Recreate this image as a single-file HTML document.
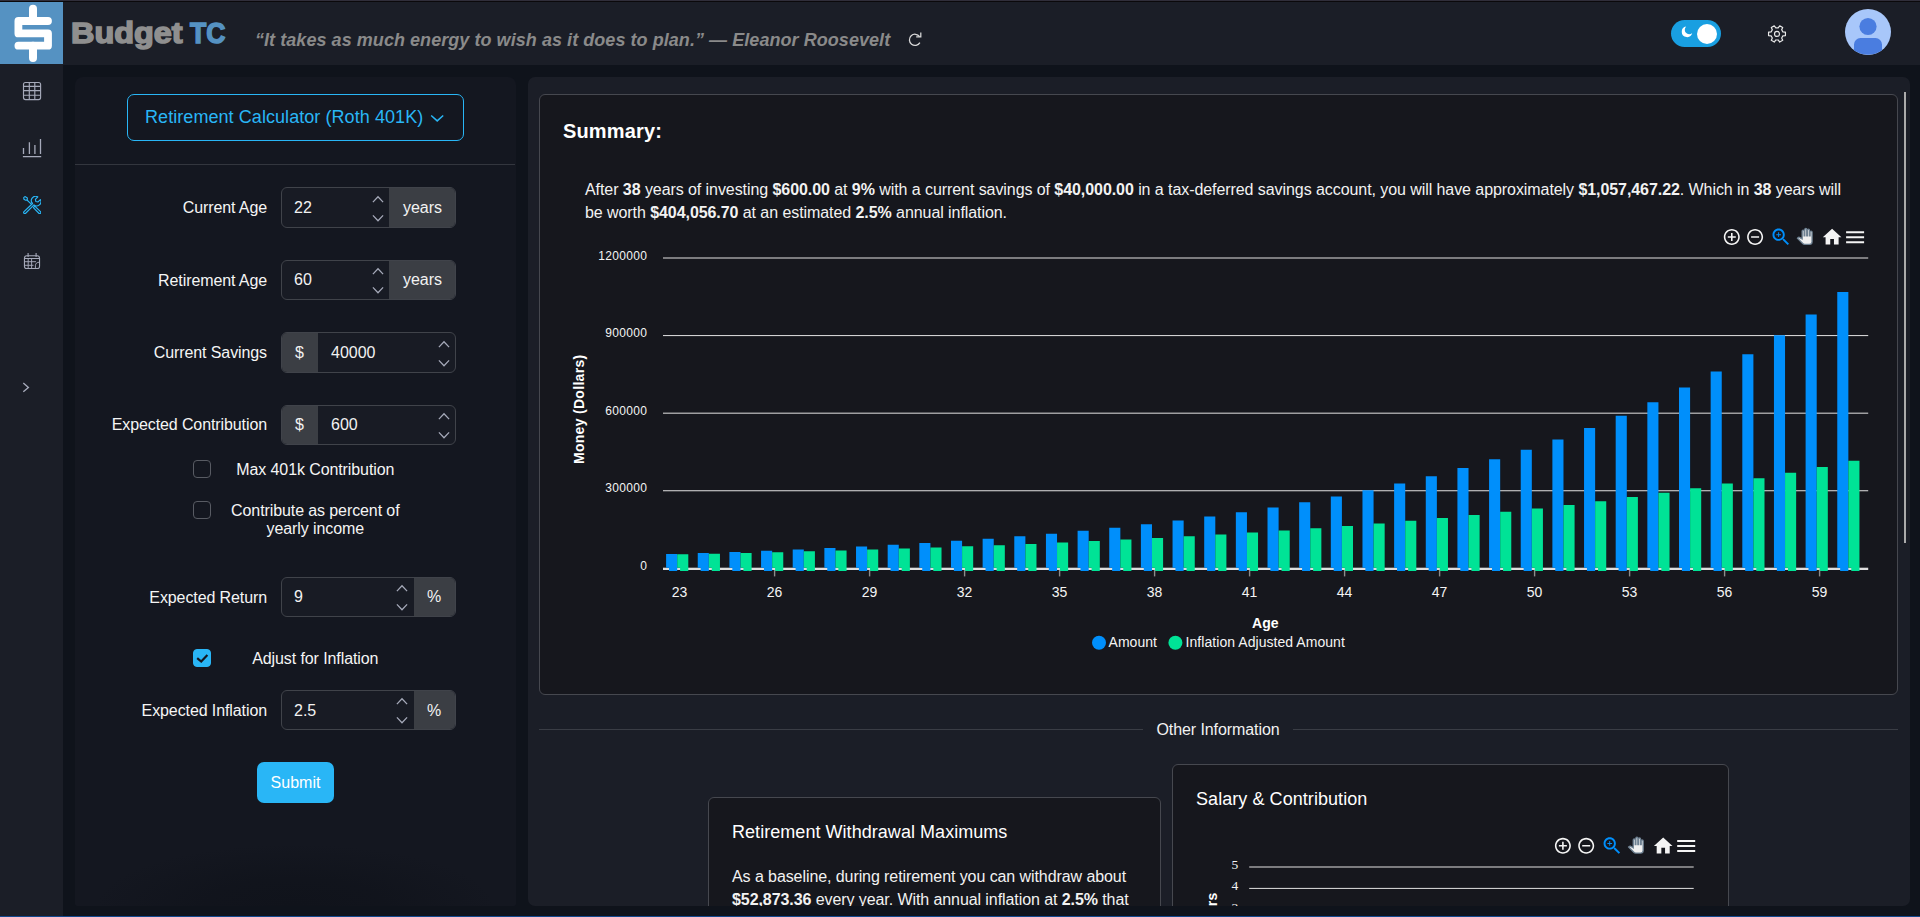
<!DOCTYPE html>
<html lang="en">
<head>
<meta charset="utf-8">
<title>Budget TC - Retirement Calculator</title>
<style>
*{box-sizing:border-box;margin:0;padding:0}
html,body{width:1920px;height:917px;overflow:hidden;background:#0f131b;font-family:"Liberation Sans",Arial,sans-serif;color:#f2f2f2}
body{position:relative}
.abs{position:absolute}
#topline1{left:0;top:0;width:1920px;height:1px;background:#302e3a}
#topline2{left:0;top:1px;width:1920px;height:1px;background:#0b090b}
#header{left:0;top:2px;width:1920px;height:63px;background:#1b1e27}
#sidebar{left:0;top:64px;width:63px;height:852px;background:#1b1e27}
#logo{left:0;top:2px;width:63px;height:62px;background:#5592c2}
.brand{top:13.3px;height:40px;line-height:40px;font-weight:700;font-size:28.8px;white-space:nowrap;transform-origin:0 50%}
.b1{color:#8f8f8f;-webkit-text-stroke:1.5px #8f8f8f}
.b2{color:#5592c2;-webkit-text-stroke:1.5px #5592c2}
#quote{left:255px;top:28px;height:24px;line-height:24px;font-size:18px;font-style:italic;font-weight:700;color:#8a8a8a;white-space:nowrap;letter-spacing:.055px}
#bottomline{left:0;top:916px;width:1920px;height:1px;background:#13498f}
#leftpanel{left:75px;top:77px;width:441px;height:829px;border-radius:8px 8px 2px 2px;background:#141720;overflow:hidden}
#leftpanel .glow{left:0;top:0;width:440px;height:829px;background:radial-gradient(ellipse 200px 62px at 50% 100%,#10131b 0%,rgba(16,19,27,.75) 45%,rgba(16,19,27,0) 100%)}
#mainpanel{left:528px;top:77px;width:1382px;height:829px;border-radius:7px;background:#1b1e27;overflow:hidden}
.card{position:absolute;background:#16171d;border:1px solid #46484f;border-radius:6px}
.lbl{position:absolute;letter-spacing:-.1px;font-size:16px;line-height:20px;height:20px;white-space:nowrap;text-align:right;color:#f5f5f5}
.grp{position:absolute;left:281px;width:175px;height:40px;border:1px solid #40434a;border-radius:6px;background:#181b24;overflow:hidden}
.grp .addon{position:absolute;top:-1px;background:#3b3e44}
.val{position:absolute;height:20px;line-height:20px;font-size:16px;color:#f2f2f2;white-space:nowrap}
.cb{position:absolute;left:193px;width:18px;height:18px;border:1px solid #585b63;border-radius:4px;background:#141720}
.cb.on{background:#29b6f6;border-color:#29b6f6}
.cbl{position:absolute;letter-spacing:-.1px;font-size:16px;line-height:18px;text-align:center;color:#f5f5f5;white-space:nowrap}
</style>
</head>
<body>
<div class="abs" id="header"></div>
<div class="abs" id="sidebar"></div>
<div class="abs" id="topline1"></div><div class="abs" id="topline2"></div>
<div class="abs" id="logo"><svg width="63" height="62" viewBox="0 2 63 62" style="display:block">
<path d="M33 8.7V21M33 45.7V58" stroke="#fff" stroke-width="8" stroke-linecap="round" fill="none"/>
<path d="M48 21H18.4V33.4H48V45.7H18.4" stroke="#fff" stroke-width="7.8" stroke-linecap="round" stroke-linejoin="round" fill="none"/>
</svg></div>
<div class="abs brand b1" style="left:71.200px;transform:scaleX(1.126)">Budget</div><div class="abs brand b2" style="left:189.700px;transform:scaleX(0.922)">TC</div>
<div class="abs" id="quote">“It takes as much energy to wish as it does to plan.” — Eleanor Roosevelt</div>
<svg class="abs" style="left:905px;top:30px" width="20" height="20" viewBox="905 30 20 20"><path d="M919.6 36.6A5.6 5.6 0 1 0 919.9 42.6" stroke="#d9d9d9" stroke-width="1.25" fill="none"/><path d="M916.2 36.8H920.8V32.6" stroke="#d9d9d9" stroke-width="1.25" fill="none"/></svg>
<div class="abs" style="left:1671px;top:20px;width:50px;height:27px;border-radius:14px;background:#199fe1"></div>
<div class="abs" style="left:1697px;top:23.5px;width:20px;height:20px;border-radius:10px;background:#fff"></div>
<svg class="abs" style="left:1680px;top:25px" width="14" height="14" viewBox="0 0 14 14"><path d="M6.2 1.6A5.3 5.3 0 1 0 12.2 8.1A4.1 4.1 0 0 1 6.2 1.6Z" fill="#fff"/></svg>
<svg class="abs" style="left:1765px;top:22px" width="24" height="24" viewBox="1765 22 24 24"><path d="M1782.87 31.89 L1785.43 32.19 L1785.43 35.61 L1782.87 35.91 L1781.67 37.98 L1782.69 40.35 L1779.73 42.05 L1778.19 39.98 L1775.81 39.98 L1774.27 42.05 L1771.31 40.35 L1772.33 37.98 L1771.13 35.91 L1768.57 35.61 L1768.57 32.19 L1771.13 31.89 L1772.33 29.82 L1771.31 27.45 L1774.27 25.75 L1775.81 27.82 L1778.19 27.82 L1779.73 25.75 L1782.69 27.45 L1781.67 29.82Z" stroke="#e8e8e8" stroke-width="1.2" stroke-linejoin="round" fill="none"/><circle cx="1777" cy="33.9" r="2.5" stroke="#e8e8e8" stroke-width="1.15" fill="none"/></svg>
<svg class="abs" style="left:1845px;top:9px" width="46" height="46" viewBox="0 0 46 46"><defs><clipPath id="avc"><circle cx="23" cy="23" r="23"/></clipPath></defs><circle cx="23" cy="23" r="23" fill="#a8c7fa"/><g clip-path="url(#avc)" fill="#4a7de0"><circle cx="23" cy="17.5" r="8.6"/><path d="M9 42v-6.5a6.5 6.5 0 0 1 6.5-6.5h15a6.5 6.5 0 0 1 6.5 6.5V42a30 30 0 0 1-28 0z"/></g></svg>
<svg class="abs" style="left:20px;top:79px" width="24" height="24" viewBox="20 79 24 24" fill="none" stroke="#a6aaba" stroke-width="1.15">
<rect x="23.5" y="82.5" width="17.1" height="17.1" rx="2"/><path d="M29.3 82.5V99.6M34.8 82.5V99.6M23.5 86.3H40.6M23.5 90.6H40.6M23.5 95.2H40.6"/></svg>
<svg class="abs" style="left:20px;top:136px" width="24" height="24" viewBox="20 136 24 24" fill="none" stroke="#a6aaba" stroke-width="1.3" stroke-linecap="butt">
<path d="M23.5 147.9V153.9M29.4 142.3V153.9M34.9 144.9V153.9M40.5 138.9V153.9M22.9 156.6H41.2"/></svg>
<svg class="abs" style="left:22.9px;top:195.9px" width="18.3" height="18.3" viewBox="0 0 18 18" fill="none" stroke="#29b6f6" stroke-width="1.15" stroke-linejoin="round" stroke-linecap="round">
<path d="M0.7 1.6L1.9 0.6L4.3 1.9L4.1 3.9L2.6 4.2L0.9 3.2Z"/>
<path d="M3.9 3.9L8.4 8.2"/>
<path d="M10.2 11.4L11.6 10L17.2 15.4A1 1 0 0 1 15.6 17Z"/>
<path d="M1 15.4L9.4 7.4A4.2 4.2 0 0 1 14.6 0.9L12.2 3.3L12.6 5.4L14.8 5.8L17.1 3.5A4.2 4.2 0 0 1 10.8 8.8L2.6 17A1.1 1.1 0 0 1 1 15.4Z"/>
</svg>
<svg class="abs" style="left:20px;top:250px" width="24" height="24" viewBox="20 250 24 24" fill="none" stroke="#a6aaba" stroke-width="1.1" stroke-linejoin="round">
<rect x="24.45" y="255.75" width="15.1" height="12.8" rx="2.4"/>
<path d="M28.1 253V257M36.1 253V257M24.500 258.500H39.500"/><path stroke-width="0.95" d="M24.800 261.700H36M24.800 265.300H33.500M28.200 259V268M31.600 259V268M39.500 262.200C37 262.200 35.400 263.400 35.400 265.800V268.500"/></svg>
<svg class="abs" style="left:18px;top:379px" width="16" height="16" viewBox="18 379 16 16" fill="none" stroke="#a6aaba" stroke-width="1.35"><path d="M23.3 383.1L28.4 387.45L23.3 391.8"/></svg>
<div class="abs" id="leftpanel"><div class="abs glow"></div></div>
<div class="abs" style="left:127px;top:94px;width:337px;height:47px;border:1px solid #29b6f6;border-radius:7px"></div>
<div class="abs" style="left:145px;top:105px;height:24px;line-height:24px;font-size:18px;color:#29b6f6;white-space:nowrap;letter-spacing:.065px">Retirement Calculator (Roth 401K)</div>
<svg class="abs" style="left:428px;top:110px" width="18" height="16" viewBox="428 110 18 16" fill="none" stroke="#29b6f6" stroke-width="1.5"><path d="M431.2 115.5L437.2 120.900L443.2 115.5"/></svg>
<div class="abs" style="left:75px;top:164px;width:440px;height:1px;background:#33363e"></div>
<div class="lbl" style="left:75px;width:192px;top:197.5px">Current Age</div>
<div class="grp" style="top:187px;height:41px"><div class="addon" style="left:107px;width:68px;height:41px"></div></div>
<div class="val" style="left:294px;top:198px">22</div><div class="val" style="left:389px;width:67px;text-align:center;top:198px">years</div>
<svg class="abs" style="left:370.2px;top:187.5px" width="16" height="40" viewBox="0 0 16 40" fill="none" stroke="#a6aaba" stroke-width="1.25"><path d="M2.9 14.1L8 8.7L13.1 14.100M2.9 27.4L8 32.8L13.1 27.400"/></svg>
<div class="lbl" style="left:75px;width:192px;top:270.5px">Retirement Age</div>
<div class="grp" style="top:260px;height:40px"><div class="addon" style="left:107px;width:68px;height:40px"></div></div>
<div class="val" style="left:294px;top:269.5px">60</div><div class="val" style="left:389px;width:67px;text-align:center;top:269.5px">years</div>
<svg class="abs" style="left:370.2px;top:260.0px" width="16" height="40" viewBox="0 0 16 40" fill="none" stroke="#a6aaba" stroke-width="1.25"><path d="M2.9 14.1L8 8.7L13.1 14.100M2.9 27.4L8 32.8L13.1 27.400"/></svg>
<div class="lbl" style="left:75px;width:192px;top:342.5px">Current Savings</div>
<div class="grp" style="top:332px;height:41px"><div class="addon" style="left:-1px;width:37px;height:41px"></div></div>
<div class="val" style="left:281px;width:37px;text-align:center;top:343px">$</div><div class="val" style="left:331px;top:343px">40000</div>
<svg class="abs" style="left:435.8px;top:332.5px" width="16" height="40" viewBox="0 0 16 40" fill="none" stroke="#a6aaba" stroke-width="1.25"><path d="M2.9 14.1L8 8.7L13.1 14.100M2.9 27.4L8 32.8L13.1 27.400"/></svg>
<div class="lbl" style="left:75px;width:192px;top:415px">Expected Contribution</div>
<div class="grp" style="top:405px;height:40px"><div class="addon" style="left:-1px;width:37px;height:40px"></div></div>
<div class="val" style="left:281px;width:37px;text-align:center;top:414.5px">$</div><div class="val" style="left:331px;top:414.5px">600</div>
<svg class="abs" style="left:435.8px;top:405.0px" width="16" height="40" viewBox="0 0 16 40" fill="none" stroke="#a6aaba" stroke-width="1.25"><path d="M2.9 14.1L8 8.7L13.1 14.100M2.9 27.4L8 32.8L13.1 27.400"/></svg>
<div class="lbl" style="left:75px;width:192px;top:588px">Expected Return</div>
<div class="grp" style="top:577px;height:40px"><div class="addon" style="left:132px;width:43px;height:40px"></div></div>
<div class="val" style="left:294px;top:586.5px">9</div><div class="val" style="left:413px;width:42px;text-align:center;top:586.5px">%</div>
<svg class="abs" style="left:394px;top:577.0px" width="16" height="40" viewBox="0 0 16 40" fill="none" stroke="#a6aaba" stroke-width="1.25"><path d="M2.9 14.1L8 8.7L13.1 14.100M2.9 27.4L8 32.8L13.1 27.400"/></svg>
<div class="lbl" style="left:75px;width:192px;top:701px">Expected Inflation</div>
<div class="grp" style="top:690px;height:40px"><div class="addon" style="left:132px;width:43px;height:40px"></div></div>
<div class="val" style="left:294px;top:700.5px">2.5</div><div class="val" style="left:413px;width:42px;text-align:center;top:700.5px">%</div>
<svg class="abs" style="left:394px;top:690.0px" width="16" height="40" viewBox="0 0 16 40" fill="none" stroke="#a6aaba" stroke-width="1.25"><path d="M2.9 14.1L8 8.7L13.1 14.100M2.9 27.4L8 32.8L13.1 27.400"/></svg>
<div class="cb" style="top:460px"></div><div class="cbl" style="left:215.3px;width:200px;top:461px">Max 401k Contribution</div>
<div class="cb" style="top:501px"></div><div class="cbl" style="left:215.3px;width:200px;top:502px">Contribute as percent of<br>yearly income</div>
<div class="cb on" style="top:649px"></div><svg class="abs" style="left:193px;top:649px" width="18" height="18" viewBox="0 0 18 18" fill="none" stroke="#141720" stroke-width="2.2"><path d="M4.2 9.2L8.2 12.500L14.4 6.1"/></svg><div class="cbl" style="left:215.3px;width:200px;top:650px">Adjust for Inflation</div>
<div class="abs" style="left:257px;top:762px;width:77px;height:41px;border-radius:7px;background:#29b6f6;color:#fff;font-size:16px;line-height:41px;text-align:center">Submit</div>
<div class="abs" id="mainpanel"></div>
<div class="abs" style="left:1904px;top:92px;width:2px;height:451px;background:#ababab"></div>
<div class="card" style="left:539px;top:94px;width:1359px;height:601px"></div>
<div class="abs" style="left:563px;top:118px;height:26px;line-height:26px;font-size:20px;font-weight:700;color:#fff;white-space:nowrap;letter-spacing:.15px">Summary:</div>
<div class="abs" style="left:585px;top:178px;width:1290px;font-size:16px;line-height:23px;letter-spacing:-.07px;color:#f2f2f2">After <b>38</b> years of investing <b>$600.00</b> at <b>9%</b> with a current savings of <b>$40,000.00</b> in a tax-deferred savings account, you will have approximately <b>$1,057,467.22</b>. Which in <b>38</b> years will<br>be worth <b>$404,056.70</b> at an estimated <b>2.5%</b> annual inflation.</div>
<svg class="abs" style="left:540px;top:95px" width="1357" height="599" viewBox="540 95 1357 599" font-family="Liberation Sans, Arial, sans-serif"><g transform="translate(0,0)"><g transform="translate(1731.8 237) scale(0.8) translate(-12 -12)"><path d="M13 7h-2v4H7v2h4v4h2v-4h4v-2h-4V7zm-1-5C6.480 2 2 6.480 2 12s4.480 10 10 10 10-4.480 10-10S17.520 2 12 2zm0 18c-4.410 0-8-3.590-8-8s3.590-8 8-8 8 3.590 8 8-3.590 8-8 8z" fill="#f4f4f4" /></g><g transform="translate(1755.1 237) scale(0.8) translate(-12 -12)"><path d="M7 11v2h10v-2H7zm5-9C6.480 2 2 6.480 2 12s4.480 10 10 10 10-4.480 10-10S17.520 2 12 2zm0 18c-4.410 0-8-3.590-8-8s3.590-8 8-8 8 3.590 8 8-3.590 8-8 8z" fill="#f4f4f4" /></g><g transform="translate(1780.75 236.8) scale(0.945) translate(-11.75 -11.75)"><path d="M15.500 14h-.790l-.280-.270C15.410 12.590 16 11.110 16 9.500 16 5.910 13.090 3 9.500 3S3 5.910 3 9.500 5.910 16 9.500 16c1.610 0 3.090-.590 4.230-1.570l.270.280v.790l5 4.990L20.490 19l-4.990-5zm-6 0C7.010 14 5 11.990 5 9.500S7.010 5 9.500 5 14 7.010 14 9.500 11.990 14 9.500 14z" fill="#008FFB" /></g><g transform="translate(1780.75 236.8) scale(0.945) translate(-11.75 -11.75)"><path d="M12 10h-2v2H9v-2H7V9h2V7h1v2h2v1z" fill="#008FFB" /></g><g transform="translate(1804.8 236.4) scale(0.66) translate(-12 -12)"><path d="M23 5.500V20c0 2.200-1.800 4-4 4h-7.300c-1.080 0-2.100-.430-2.850-1.190L1 14.830s1.260-1.230 1.300-1.250c.220-.190.490-.290.790-.290.220 0 .420.060.600.160.040.010 4.310 2.460 4.310 2.460V4c0-.830.670-1.500 1.500-1.500S11 3.170 11 4v7h1V1.500c0-.830.670-1.500 1.500-1.500S15 .670 15 1.500V11h1V2.500c0-.830.670-1.500 1.500-1.500s1.500.670 1.500 1.500V11h1V5.500c0-.830.670-1.500 1.500-1.500s1.500.670 1.500 1.500z" fill="#f0f0f0" stroke="#6e8192" stroke-width="2"/></g><g transform="translate(1832.1 236.7) scale(0.93) translate(-12 -11.5)"><path d="M10 20v-6h4v6h5v-8h3L12 3 2 12h3v8z" fill="#f4f4f4" /></g><g transform="translate(1855.1 237.2) scale(1.0) translate(-12 -12)"><path d="M3 18h18v-2H3v2zm0-5h18v-2H3v2zm0-7v2h18V6H3z" fill="#f4f4f4" /></g></g><rect x="663.0" y="257.50" width="1205.20" height="1" fill="#e2e2e2"/><rect x="663.0" y="335.08" width="1205.20" height="1" fill="#e2e2e2"/><rect x="663.0" y="412.67" width="1205.20" height="1" fill="#e2e2e2"/><rect x="663.0" y="490.25" width="1205.20" height="1" fill="#e2e2e2"/><rect x="663.0" y="567.7" width="1205.20" height="2.3" fill="#dedede"/><text x="647.3" y="260" text-anchor="end" font-size="12" letter-spacing="0.33" fill="#f4f4f4">1200000</text><text x="647.3" y="337" text-anchor="end" font-size="12" letter-spacing="0.33" fill="#f4f4f4">900000</text><text x="647.3" y="415" text-anchor="end" font-size="12" letter-spacing="0.33" fill="#f4f4f4">600000</text><text x="647.3" y="492" text-anchor="end" font-size="12" letter-spacing="0.33" fill="#f4f4f4">300000</text><text x="647.3" y="570" text-anchor="end" font-size="12" letter-spacing="0.33" fill="#f4f4f4">0</text><text transform="translate(584 409.3) rotate(-90)" text-anchor="middle" font-size="14" font-weight="700" letter-spacing="0.3" fill="#fff">Money (Dollars)</text><path d="M666.10 554.07H677.20V571H669.00V567.7H666.10Z" fill="#008FFB"/><path d="M677.20 554.36H688.30V571H680.10V567.7H677.20Z" fill="#00E396"/><path d="M697.75 553.06H708.85V571H700.65V567.7H697.75Z" fill="#008FFB"/><path d="M708.85 553.67H719.95V571H711.75V567.7H708.85Z" fill="#00E396"/><path d="M729.41 551.95H740.51V571H732.31V567.7H729.41Z" fill="#008FFB"/><path d="M740.51 552.93H751.61V571H743.41V567.7H740.51Z" fill="#00E396"/><path d="M761.06 550.75H772.16V571H763.96V567.7H761.06Z" fill="#008FFB"/><path d="M772.16 552.15H783.26V571H775.06V567.7H772.16Z" fill="#00E396"/><path d="M792.71 549.43H803.81V571H795.61V567.7H792.71Z" fill="#008FFB"/><path d="M803.81 551.33H814.91V571H806.71V567.7H803.81Z" fill="#00E396"/><path d="M824.37 548.00H835.47V571H827.26V567.7H824.37Z" fill="#008FFB"/><path d="M835.47 550.45H846.57V571H838.37V567.7H835.47Z" fill="#00E396"/><path d="M856.02 546.44H867.12V571H858.92V567.7H856.02Z" fill="#008FFB"/><path d="M867.12 549.51H878.22V571H870.02V567.7H867.12Z" fill="#00E396"/><path d="M887.67 544.74H898.77V571H890.57V567.7H887.67Z" fill="#008FFB"/><path d="M898.77 548.52H909.87V571H901.67V567.7H898.77Z" fill="#00E396"/><path d="M919.32 542.88H930.42V571H922.22V567.7H919.32Z" fill="#008FFB"/><path d="M930.42 547.46H941.52V571H933.32V567.7H930.42Z" fill="#00E396"/><path d="M950.98 540.86H962.08V571H953.88V567.7H950.98Z" fill="#008FFB"/><path d="M962.08 546.34H973.18V571H964.98V567.7H962.08Z" fill="#00E396"/><path d="M982.63 538.66H993.73V571H985.53V567.7H982.63Z" fill="#008FFB"/><path d="M993.73 545.15H1004.83V571H996.63V567.7H993.73Z" fill="#00E396"/><path d="M1014.28 536.25H1025.38V571H1017.18V567.7H1014.28Z" fill="#008FFB"/><path d="M1025.38 543.88H1036.48V571H1028.28V567.7H1025.38Z" fill="#00E396"/><path d="M1045.94 533.64H1057.04V571H1048.84V567.7H1045.94Z" fill="#008FFB"/><path d="M1057.04 542.53H1068.14V571H1059.94V567.7H1057.04Z" fill="#00E396"/><path d="M1077.59 530.78H1088.69V571H1080.49V567.7H1077.59Z" fill="#008FFB"/><path d="M1088.69 541.10H1099.79V571H1091.59V567.7H1088.69Z" fill="#00E396"/><path d="M1109.24 527.67H1120.34V571H1112.14V567.7H1109.24Z" fill="#008FFB"/><path d="M1120.34 539.58H1131.44V571H1123.24V567.7H1120.34Z" fill="#00E396"/><path d="M1140.89 524.28H1151.99V571H1143.80V567.7H1140.89Z" fill="#008FFB"/><path d="M1151.99 537.96H1163.09V571H1154.89V567.7H1151.99Z" fill="#00E396"/><path d="M1172.55 520.58H1183.65V571H1175.45V567.7H1172.55Z" fill="#008FFB"/><path d="M1183.65 536.24H1194.75V571H1186.55V567.7H1183.65Z" fill="#00E396"/><path d="M1204.20 516.55H1215.30V571H1207.10V567.7H1204.20Z" fill="#008FFB"/><path d="M1215.30 534.41H1226.40V571H1218.20V567.7H1215.30Z" fill="#00E396"/><path d="M1235.85 512.16H1246.95V571H1238.75V567.7H1235.85Z" fill="#008FFB"/><path d="M1246.95 532.47H1258.05V571H1249.85V567.7H1246.95Z" fill="#00E396"/><path d="M1267.51 507.38H1278.61V571H1270.41V567.7H1267.51Z" fill="#008FFB"/><path d="M1278.61 530.41H1289.71V571H1281.51V567.7H1278.61Z" fill="#00E396"/><path d="M1299.16 502.16H1310.26V571H1302.06V567.7H1299.16Z" fill="#008FFB"/><path d="M1310.26 528.22H1321.36V571H1313.16V567.7H1310.26Z" fill="#00E396"/><path d="M1330.81 496.47H1341.91V571H1333.71V567.7H1330.81Z" fill="#008FFB"/><path d="M1341.91 525.89H1353.01V571H1344.81V567.7H1341.91Z" fill="#00E396"/><path d="M1362.47 490.27H1373.57V571H1365.37V567.7H1362.47Z" fill="#008FFB"/><path d="M1373.57 523.41H1384.67V571H1376.47V567.7H1373.57Z" fill="#00E396"/><path d="M1394.12 483.51H1405.22V571H1397.02V567.7H1394.12Z" fill="#008FFB"/><path d="M1405.22 520.78H1416.32V571H1408.12V567.7H1405.22Z" fill="#00E396"/><path d="M1425.77 476.15H1436.87V571H1428.67V567.7H1425.77Z" fill="#008FFB"/><path d="M1436.87 517.98H1447.97V571H1439.77V567.7H1436.87Z" fill="#00E396"/><path d="M1457.42 468.12H1468.52V571H1460.33V567.7H1457.42Z" fill="#008FFB"/><path d="M1468.52 515.01H1479.62V571H1471.42V567.7H1468.52Z" fill="#00E396"/><path d="M1489.08 459.37H1500.18V571H1491.98V567.7H1489.08Z" fill="#008FFB"/><path d="M1500.18 511.85H1511.28V571H1503.08V567.7H1500.18Z" fill="#00E396"/><path d="M1520.73 449.83H1531.83V571H1523.63V567.7H1520.73Z" fill="#008FFB"/><path d="M1531.83 508.49H1542.93V571H1534.73V567.7H1531.83Z" fill="#00E396"/><path d="M1552.38 439.44H1563.48V571H1555.28V567.7H1552.38Z" fill="#008FFB"/><path d="M1563.48 504.93H1574.58V571H1566.38V567.7H1563.48Z" fill="#00E396"/><path d="M1584.04 428.10H1595.14V571H1586.94V567.7H1584.04Z" fill="#008FFB"/><path d="M1595.14 501.13H1606.24V571H1598.04V567.7H1595.14Z" fill="#00E396"/><path d="M1615.69 415.75H1626.79V571H1618.59V567.7H1615.69Z" fill="#008FFB"/><path d="M1626.79 497.11H1637.89V571H1629.69V567.7H1626.79Z" fill="#00E396"/><path d="M1647.34 402.29H1658.44V571H1650.24V567.7H1647.34Z" fill="#008FFB"/><path d="M1658.44 492.82H1669.54V571H1661.34V567.7H1658.44Z" fill="#00E396"/><path d="M1679.00 387.61H1690.10V571H1681.90V567.7H1679.00Z" fill="#008FFB"/><path d="M1690.10 488.27H1701.20V571H1693.00V567.7H1690.10Z" fill="#00E396"/><path d="M1710.65 371.62H1721.75V571H1713.55V567.7H1710.65Z" fill="#008FFB"/><path d="M1721.75 483.44H1732.85V571H1724.65V567.7H1721.75Z" fill="#00E396"/><path d="M1742.30 354.18H1753.40V571H1745.20V567.7H1742.30Z" fill="#008FFB"/><path d="M1753.40 478.29H1764.50V571H1756.30V567.7H1753.40Z" fill="#00E396"/><path d="M1773.95 335.17H1785.05V571H1776.86V567.7H1773.95Z" fill="#008FFB"/><path d="M1785.05 472.83H1796.15V571H1787.95V567.7H1785.05Z" fill="#00E396"/><path d="M1805.61 314.46H1816.71V571H1808.51V567.7H1805.61Z" fill="#008FFB"/><path d="M1816.71 467.03H1827.81V571H1819.61V567.7H1816.71Z" fill="#00E396"/><path d="M1837.26 291.88H1848.36V571H1840.16V567.7H1837.26Z" fill="#008FFB"/><path d="M1848.36 460.86H1859.46V571H1851.26V567.7H1848.36Z" fill="#00E396"/><text x="679.60" y="597" text-anchor="middle" font-size="14" fill="#f4f4f4">23</text><rect x="773.90" y="570" width="1.4" height="6.4" fill="#8c8c8c"/><text x="774.60" y="597" text-anchor="middle" font-size="14" fill="#f4f4f4">26</text><rect x="868.90" y="570" width="1.4" height="6.4" fill="#8c8c8c"/><text x="869.60" y="597" text-anchor="middle" font-size="14" fill="#f4f4f4">29</text><rect x="963.90" y="570" width="1.4" height="6.4" fill="#8c8c8c"/><text x="964.60" y="597" text-anchor="middle" font-size="14" fill="#f4f4f4">32</text><rect x="1058.90" y="570" width="1.4" height="6.4" fill="#8c8c8c"/><text x="1059.60" y="597" text-anchor="middle" font-size="14" fill="#f4f4f4">35</text><rect x="1153.90" y="570" width="1.4" height="6.4" fill="#8c8c8c"/><text x="1154.60" y="597" text-anchor="middle" font-size="14" fill="#f4f4f4">38</text><rect x="1248.90" y="570" width="1.4" height="6.4" fill="#8c8c8c"/><text x="1249.60" y="597" text-anchor="middle" font-size="14" fill="#f4f4f4">41</text><rect x="1343.90" y="570" width="1.4" height="6.4" fill="#8c8c8c"/><text x="1344.60" y="597" text-anchor="middle" font-size="14" fill="#f4f4f4">44</text><rect x="1438.90" y="570" width="1.4" height="6.4" fill="#8c8c8c"/><text x="1439.60" y="597" text-anchor="middle" font-size="14" fill="#f4f4f4">47</text><rect x="1533.90" y="570" width="1.4" height="6.4" fill="#8c8c8c"/><text x="1534.60" y="597" text-anchor="middle" font-size="14" fill="#f4f4f4">50</text><rect x="1628.90" y="570" width="1.4" height="6.4" fill="#8c8c8c"/><text x="1629.60" y="597" text-anchor="middle" font-size="14" fill="#f4f4f4">53</text><rect x="1723.90" y="570" width="1.4" height="6.4" fill="#8c8c8c"/><text x="1724.60" y="597" text-anchor="middle" font-size="14" fill="#f4f4f4">56</text><rect x="1818.90" y="570" width="1.4" height="6.4" fill="#8c8c8c"/><text x="1819.60" y="597" text-anchor="middle" font-size="14" fill="#f4f4f4">59</text><text x="1265.3" y="628" text-anchor="middle" font-size="14" font-weight="700" fill="#fff">Age</text><circle cx="1099" cy="642.7" r="7" fill="#008FFB"/><text x="1108.6" y="647.4" font-size="14" fill="#f4f4f4">Amount</text><circle cx="1175.4" cy="642.7" r="7" fill="#00E396"/><text x="1185.6" y="647.4" font-size="14" letter-spacing="0.05" fill="#f4f4f4">Inflation Adjusted Amount</text></svg>
<div class="abs" style="left:539px;top:729px;width:604px;height:1px;background:#3a3d45"></div><div class="abs" style="left:1293px;top:729px;width:605px;height:1px;background:#3a3d45"></div>
<div class="abs" style="left:1143px;top:720px;width:150px;height:20px;line-height:20px;font-size:16px;letter-spacing:-.08px;text-align:center;color:#f2f2f2;white-space:nowrap">Other Information</div>
<div class="abs" style="left:528px;top:740px;width:1382px;height:166px;overflow:hidden;border-radius:0 0 7px 7px">
<div class="card" style="left:180px;top:57px;width:453px;height:200px"></div>
<div class="abs" style="left:204px;top:80px;height:24px;line-height:24px;font-size:18px;color:#fff;white-space:nowrap;letter-spacing:.045px">Retirement Withdrawal Maximums</div>
<div class="abs" style="left:204px;top:124.500px;width:420px;font-size:16px;line-height:23px;letter-spacing:-.08px;color:#f2f2f2;white-space:nowrap">As a baseline, during retirement you can withdraw about<br><b>$52,873.36</b> every year. With annual inflation at <b>2.5%</b> that</div>
<div class="card" style="left:644px;top:24px;width:557px;height:300px"></div>
<div class="abs" style="left:668px;top:46.500px;height:24px;line-height:24px;font-size:18px;color:#fff;white-space:nowrap;letter-spacing:.06px">Salary &amp; Contribution</div>
<svg class="abs" style="left:646px;top:80px" width="554" height="120" viewBox="1174 820 554 120" font-family="Liberation Sans, Arial, sans-serif"><g transform="translate(-168.9,608.8)"><g transform="translate(1731.8 237) scale(0.8) translate(-12 -12)"><path d="M13 7h-2v4H7v2h4v4h2v-4h4v-2h-4V7zm-1-5C6.480 2 2 6.480 2 12s4.480 10 10 10 10-4.480 10-10S17.520 2 12 2zm0 18c-4.410 0-8-3.590-8-8s3.590-8 8-8 8 3.590 8 8-3.590 8-8 8z" fill="#f4f4f4" /></g><g transform="translate(1755.1 237) scale(0.8) translate(-12 -12)"><path d="M7 11v2h10v-2H7zm5-9C6.480 2 2 6.480 2 12s4.480 10 10 10 10-4.480 10-10S17.520 2 12 2zm0 18c-4.410 0-8-3.590-8-8s3.590-8 8-8 8 3.590 8 8-3.590 8-8 8z" fill="#f4f4f4" /></g><g transform="translate(1780.75 236.8) scale(0.945) translate(-11.75 -11.75)"><path d="M15.500 14h-.790l-.280-.270C15.410 12.590 16 11.110 16 9.500 16 5.910 13.090 3 9.500 3S3 5.910 3 9.500 5.910 16 9.500 16c1.610 0 3.090-.590 4.230-1.570l.270.280v.790l5 4.990L20.490 19l-4.990-5zm-6 0C7.010 14 5 11.990 5 9.500S7.010 5 9.500 5 14 7.010 14 9.500 11.990 14 9.500 14z" fill="#008FFB" /></g><g transform="translate(1780.75 236.8) scale(0.945) translate(-11.75 -11.75)"><path d="M12 10h-2v2H9v-2H7V9h2V7h1v2h2v1z" fill="#008FFB" /></g><g transform="translate(1804.8 236.4) scale(0.66) translate(-12 -12)"><path d="M23 5.500V20c0 2.200-1.800 4-4 4h-7.300c-1.080 0-2.100-.430-2.850-1.190L1 14.830s1.260-1.230 1.300-1.250c.220-.190.490-.290.790-.290.220 0 .420.060.600.160.040.010 4.310 2.460 4.310 2.460V4c0-.830.670-1.500 1.500-1.500S11 3.170 11 4v7h1V1.500c0-.830.670-1.500 1.500-1.500S15 .670 15 1.500V11h1V2.500c0-.830.670-1.500 1.500-1.500s1.500.670 1.500 1.500V11h1V5.500c0-.830.670-1.500 1.500-1.500s1.500.670 1.500 1.500z" fill="#f0f0f0" stroke="#6e8192" stroke-width="2"/></g><g transform="translate(1832.1 236.7) scale(0.93) translate(-12 -11.5)"><path d="M10 20v-6h4v6h5v-8h3L12 3 2 12h3v8z" fill="#f4f4f4" /></g><g transform="translate(1855.1 237.2) scale(1.0) translate(-12 -12)"><path d="M3 18h18v-2H3v2zm0-5h18v-2H3v2zm0-7v2h18V6H3z" fill="#f4f4f4" /></g></g><rect x="1249.2" y="866.5" width="444.5" height="1" fill="#e2e2e2"/><rect x="1249.2" y="887.9" width="444.5" height="1" fill="#e2e2e2"/><text x="1238.2" y="869.2" text-anchor="end" font-size="13.5" font-family="Liberation Serif, Times New Roman, serif" fill="#f4f4f4">5</text><text x="1238.2" y="890.2" text-anchor="end" font-size="13.5" font-family="Liberation Serif, Times New Roman, serif" fill="#f4f4f4">4</text><text x="1238.2" y="911.6" text-anchor="end" font-size="13.5" font-family="Liberation Serif, Times New Roman, serif" fill="#f4f4f4">3</text><text transform="translate(1217 892.6) rotate(-90)" text-anchor="end" font-size="14" font-weight="700" letter-spacing="0.2" fill="#fff">Dollars</text></svg>
</div>
<div class="abs" id="bottomline"></div>
</body>
</html>
